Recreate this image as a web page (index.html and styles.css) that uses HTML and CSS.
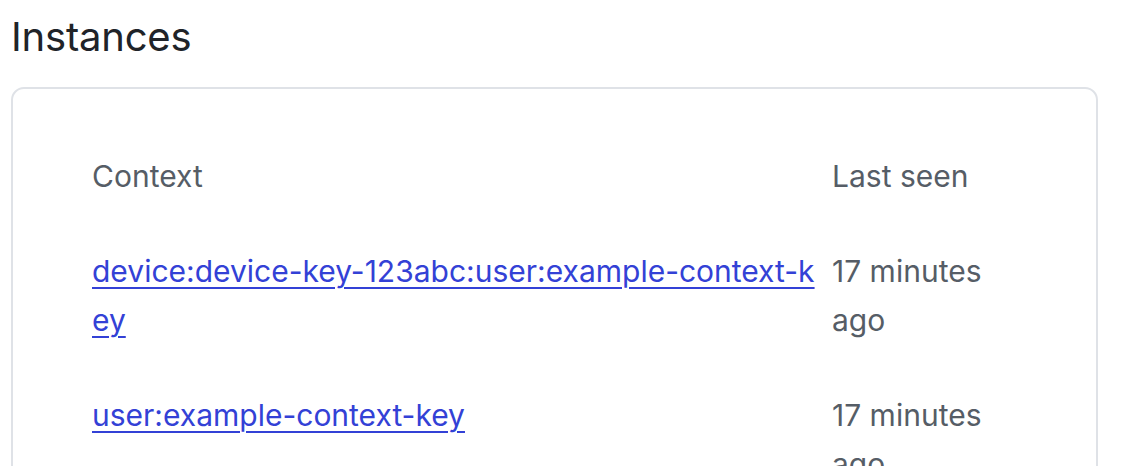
FILE: index.html
```html
<!DOCTYPE html>
<html>
<head>
<meta charset="utf-8">
<link rel="stylesheet" href="styles.css">
</head>
<body>
<main class="page">
  <h2 class="title">Instances</h2>
  <section class="card">
    <div class="table">
      <div class="cell head">Context</div>
      <div class="cell head">Last seen</div>
      <div class="cell"><a href="#" class="ctx">device:device-key-123abc:user:example-context-key</a></div>
      <div class="cell muted">17 minutes ago</div>
      <div class="cell"><a href="#" class="ctx">user:example-context-key</a></div>
      <div class="cell muted">17 minutes ago</div>
    </div>
  </section>
</main>
</body>
</html>
```
FILE: styles.css
```css
html, body {
  margin: 0;
  padding: 0;
  background: #ffffff;
}
body {
  font-family: Inter, "Noto Sans", sans-serif;
  color: #1f2328;
}
.page {
  padding: 13px 30px 0 11px;
}
.title {
  margin: 0 0 26px 0;
  font-size: 40px;
  line-height: 48px;
  font-weight: 400;
  color: #202328;
  letter-spacing: -0.2px;
}
.card {
  border: 2px solid #dfe2e7;
  border-radius: 13px;
  padding: 40px 0 0 79px;
  min-height: 420px;
}
.table {
  display: grid;
  grid-template-columns: 728px 190px;
  column-gap: 12px;
}
.cell {
  padding: 23px 0;
  font-size: 30px;
  line-height: 49px;
  color: #565d66;
}
.head {
  color: #565d66;
}
.ctx {
  color: #3341d6;
  text-decoration: underline;
  text-underline-offset: 5px;
  text-decoration-thickness: 2px;
  word-break: break-all;
}
.muted {
  color: #565d66;
}
```
